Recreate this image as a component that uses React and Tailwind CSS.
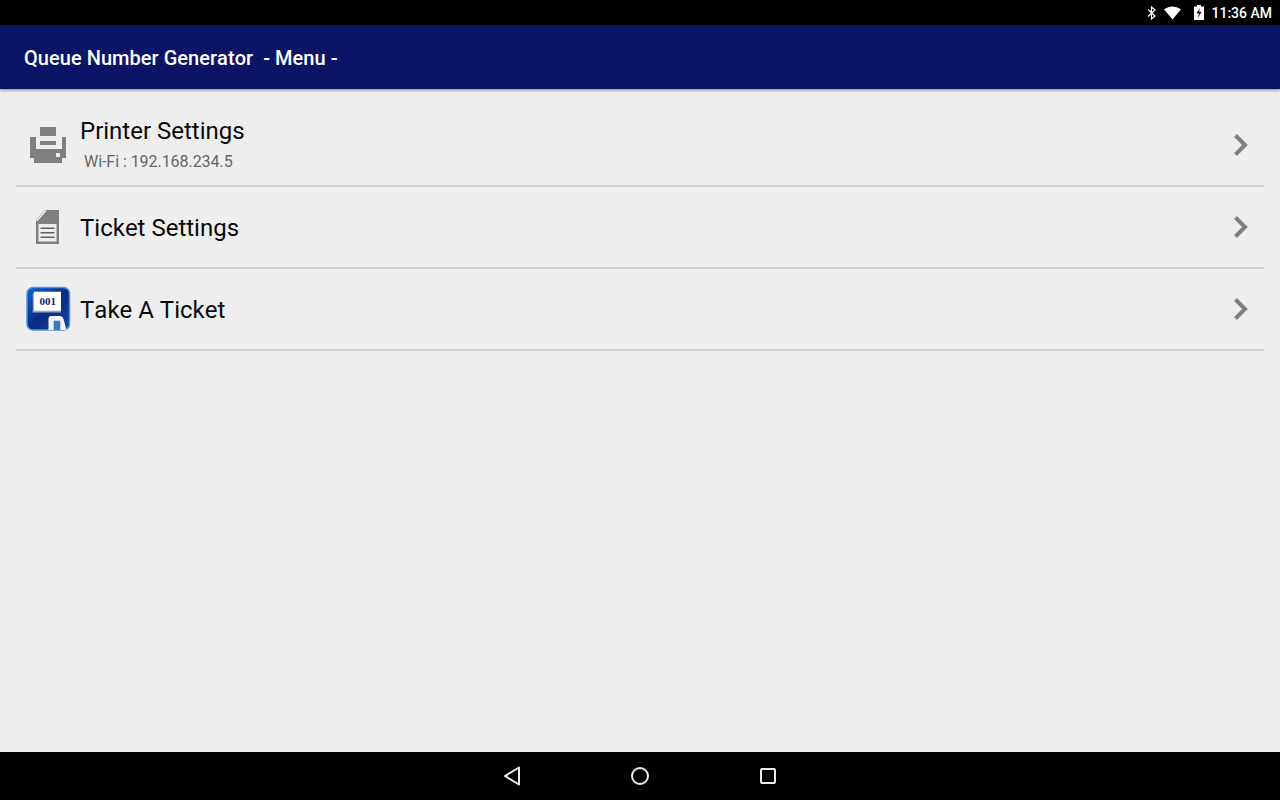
import React from "react";

const PrinterIcon = () => (
  <svg width="48" height="48" viewBox="0 0 48 48">
    <rect x="16" y="6" width="16" height="9" fill="#808080" />
    <path fill="#808080" fillRule="evenodd" d="M6 16h36v21h-4v5H10v-5H6zM12 16v12h26V16z" />
    <rect x="16" y="20" width="16" height="4" fill="#808080" />
    <rect x="32" y="32" width="4" height="4" fill="#eeeeee" />
  </svg>
);

const TicketIcon = () => (
  <svg width="48" height="48" viewBox="0 0 48 48">
    <path fill="#808080" d="M12 17 L21 7 H35 V41 H12 Z" />
    <path fill="none" stroke="#fafafa" strokeWidth="1.2" d="M12.5 18 L22 7.5" />
    <rect x="14.5" y="21" width="18" height="17.5" fill="#eeeeee" />
    <rect x="16.5" y="24.5" width="14" height="1.5" fill="#606060" />
    <rect x="16.5" y="29" width="14" height="1.5" fill="#606060" />
    <rect x="16.5" y="33.5" width="14" height="1.5" fill="#606060" />
  </svg>
);

const TakeTicketIcon = () => (
  <svg width="48" height="48" viewBox="0 0 48 48">
    <defs>
      <linearGradient id="tile" x1="0" y1="0" x2="1" y2="1">
        <stop offset="0" stopColor="#0a66d8" />
        <stop offset="0.5" stopColor="#0b2a80" />
        <stop offset="1" stopColor="#0c48a8" />
      </linearGradient>
    </defs>
    <rect x="3" y="2.5" width="42.5" height="42.5" rx="6" fill="url(#tile)" stroke="#4f93dc" strokeWidth="1.5" />
    <rect x="8.7" y="8" width="28.3" height="19.5" fill="#9aa4bc" />
    <rect x="10" y="6.7" width="27" height="19" fill="#ffffff" />
    <text
      x="23.7"
      y="19.5"
      textAnchor="middle"
      fontSize="11"
      fontWeight="700"
      fontFamily="'Liberation Serif', serif"
      fill="#14256e"
    >
      001
    </text>
    <path fill="#f2f2f2" d="M24.5 45 V34 Q24.5 31 27 31 H36 Q38.5 31 39.5 34 L42.5 45 Z" />
    <rect x="29.7" y="35.7" width="6.6" height="9.3" fill="#3f79bd" />
  </svg>
);

const rows = [
  { title: "Printer Settings", sub: "Wi-Fi : 192.168.234.5", icon: <PrinterIcon /> },
  { title: "Ticket Settings", icon: <TicketIcon /> },
  { title: "Take A Ticket", icon: <TakeTicketIcon /> },
];

const Chevron = () => (
  <svg width="16" height="24" viewBox="0 0 16 24">
    <path d="M2.5 2.5 L12 12 L2.5 21.5" fill="none" stroke="#808080" strokeWidth="4" />
  </svg>
);

export default function App() {
  return (
    <div className="w-[1280px] h-[800px] flex flex-col overflow-hidden bg-[#eeeeee] font-['Roboto',sans-serif] [font-kerning:none]">
      {/* status bar */}
      <div className="h-[25px] shrink-0 bg-black flex items-center justify-end pr-2 gap-2 text-white">
        <svg className="-mr-px" width="10" height="14" viewBox="0 0 10 14">
          <path d="M1 3.5 L8 10 L4.5 13 V1 L8 4 L1 10.5" fill="none" stroke="#fff" strokeWidth="1.2" />
        </svg>
        <svg width="17" height="14" viewBox="0 0 18 14">
          <path d="M0 3 Q9 -3 18 3 L9 14 Z" fill="#fff" />
        </svg>
        <svg className="ml-[5px]" width="10" height="15" viewBox="0 0 10 15">
          <path d="M3 0h4v1.5h3V15H0V1.5h3z" fill="#fff" />
          <path d="M6 3 L2.5 8.5H5L4 13 L7.5 6.8H5z" fill="#000" />
        </svg>
        <span className="text-[14px] font-medium leading-none -ml-px">11:36 AM</span>
      </div>

      {/* app bar */}
      <div className="h-16 shrink-0 bg-[#0c1468] flex items-center pl-6 pt-[2px] shadow-[0_1px_3px_rgba(0,0,0,0.45)] relative">
        <span className="text-white text-[20px] font-medium whitespace-pre tracking-[0.04px]">Queue Number Generator  - Menu -</span>
      </div>

      {/* menu */}
      <div className="flex-1 px-4 pt-[2px]">
        {rows.map((row) => (
          <div
            key={row.title}
            className={`flex items-center border-b-2 border-[#cfcfcf] pl-2 pr-[15px] ${row.sub ? "h-[96px] pt-[14px]" : "h-[82px]"}`}
          >
            <div className="w-12 h-12 shrink-0 mr-2">{row.icon}</div>
            <div className={`flex-1 min-w-0 ${row.sub ? "-mt-[3px]" : "pt-[2px]"}`}>
              <div className="text-[24px] leading-[30px] text-[#0a0a0a]">{row.title}</div>
              {row.sub && <div className="text-[16px] leading-5 text-[#666666] pl-1 mt-[6px] tracking-[-0.05px]">{row.sub}</div>}
            </div>
            <Chevron />
          </div>
        ))}
      </div>

      {/* nav bar */}
      <div className="h-12 shrink-0 bg-black flex items-center justify-center gap-[104px]">
        <svg width="24" height="24" viewBox="0 0 24 24">
          <path d="M19 3.5 V20.5 L5 12 Z" fill="none" stroke="#eeeeee" strokeWidth="2" strokeLinejoin="round" />
        </svg>
        <svg width="24" height="24" viewBox="0 0 24 24">
          <circle cx="12" cy="12" r="8" fill="none" stroke="#eeeeee" strokeWidth="2" />
        </svg>
        <svg width="24" height="24" viewBox="0 0 24 24">
          <rect x="5" y="5" width="14" height="14" rx="1" fill="none" stroke="#eeeeee" strokeWidth="2" />
        </svg>
      </div>
    </div>
  );
}
